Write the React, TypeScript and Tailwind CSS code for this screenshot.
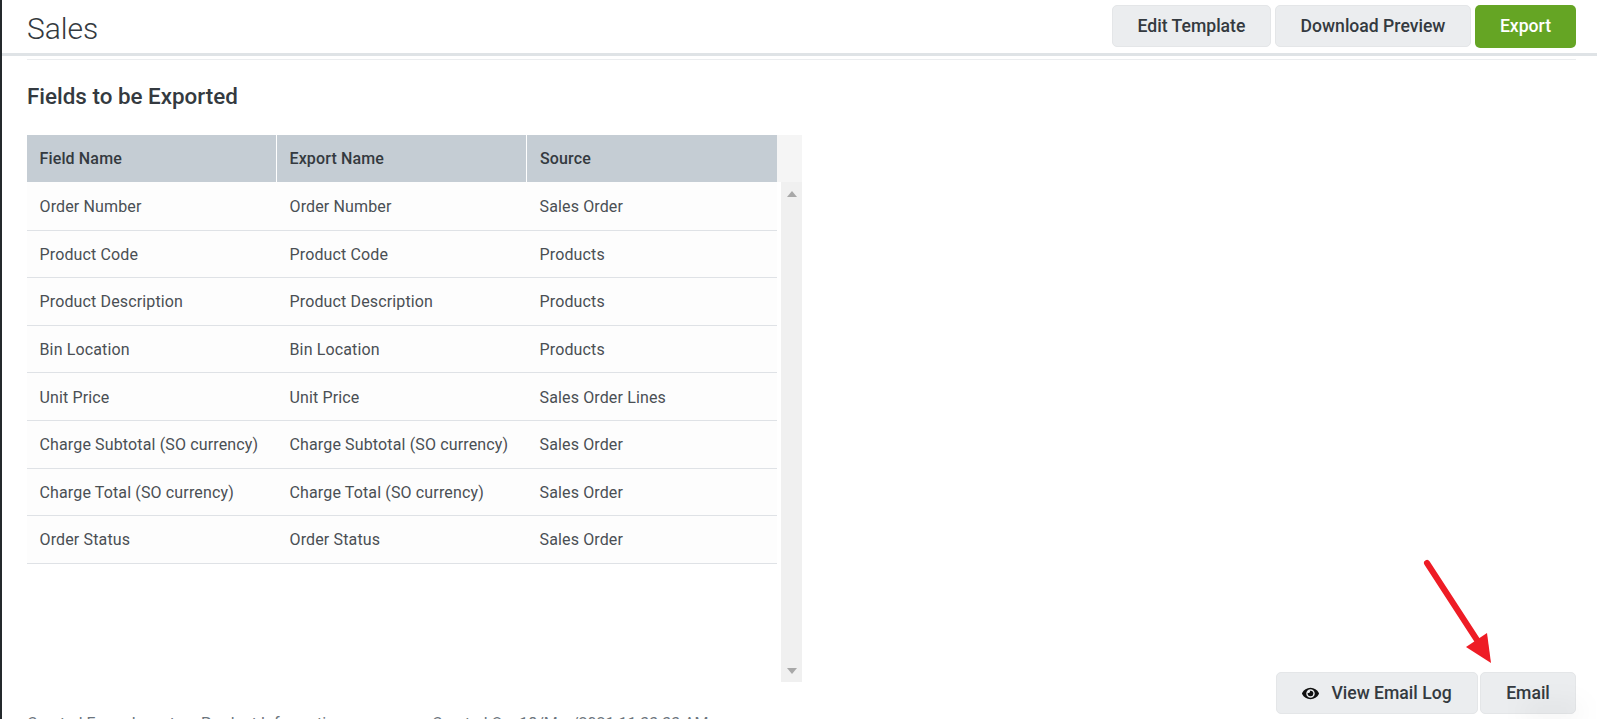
import React from "react";
import { FaEye } from "react-icons/fa";

const rows = [
  ["Order Number", "Order Number", "Sales Order"],
  ["Product Code", "Product Code", "Products"],
  ["Product Description", "Product Description", "Products"],
  ["Bin Location", "Bin Location", "Products"],
  ["Unit Price", "Unit Price", "Sales Order Lines"],
  ["Charge Subtotal (SO currency)", "Charge Subtotal (SO currency)", "Sales Order"],
  ["Charge Total (SO currency)", "Charge Total (SO currency)", "Sales Order"],
  ["Order Status", "Order Status", "Sales Order"],
];

const btn =
  "h-[42px] rounded-[5px] border border-[#e4e6e8] bg-[#ebedef] text-[17.6px] font-medium text-[#343a40] flex items-center justify-center";

export default function App() {
  return (
    <div className="relative h-[719px] w-full overflow-hidden bg-white border-l-2 border-[#24292c] font-['Roboto',sans-serif] text-[#343a40]">
      {/* header */}
      <div className="flex h-[56px] items-start justify-between border-b-[3px] border-[#dfe3e6] pl-[25px] pr-[21px] pt-[5px]">
        <h1 className="mt-[6px] text-[30px] leading-[36px] font-light text-[#343a40]">Sales</h1>
        <div className="flex gap-1">
          <button className={`${btn} w-[159px]`}>Edit Template</button>
          <button className={`${btn} w-[196px]`}>Download Preview</button>
          <button className="h-[43px] w-[101px] rounded-[5px] bg-[#65a524] text-[17.6px] font-medium text-white">Export</button>
        </div>
      </div>

      <div className="pl-[25px] pr-[21px] pt-[3px]">
        <div className="border-t border-[#ebedef]" />
        <h2 className="mt-[22px] text-[22.4px] leading-[28px] font-medium text-[#343a40]">Fields to be Exported</h2>

        <div className="mt-[25px] flex w-[775px]">
          <div className="w-[750px]">
            <div className="grid h-[47px] grid-cols-[250px_250px_250px] bg-[#c5cdd4] text-[16px] tracking-[0.14px] font-medium">
              <div className="flex items-center border-r border-white pl-[12.5px]">Field Name</div>
              <div className="flex items-center border-r border-white pl-[12.5px]">Export Name</div>
              <div className="flex items-center pl-[13px]">Source</div>
            </div>
            {rows.map((r, i) => (
              <div
                key={i}
                className={`grid ${i === 0 ? "h-[48.6px]" : "h-[47.6px]"} grid-cols-[250px_250px_250px] items-center border-b border-[#dfe2e6] bg-[#fdfdfd] pt-[2px] text-[16px] tracking-[0.14px] text-[#4a4f54]`}
              >
                <div className="pl-[12.5px]">{r[0]}</div>
                <div className="pl-[12.5px]">{r[1]}</div>
                <div className="pl-[12.5px]">{r[2]}</div>
              </div>
            ))}
          </div>
          <div className="flex h-[547px] w-[25px] flex-col">
            <div className="h-[47px] bg-[#f5f5f5]" />
            <div className="ml-[4px] flex flex-1 flex-col items-center justify-between bg-[#f0f0f0] pt-[9px] pb-[8px]">
              <div className="h-0 w-0 border-x-[5px] border-b-[6px] border-x-transparent border-b-[#a8a8a8]" />
              <div className="h-0 w-0 border-x-[5px] border-t-[6px] border-x-transparent border-t-[#a8a8a8]" />
            </div>
          </div>
        </div>
      </div>

      {/* bottom actions */}
      <div className="mt-[-10px] flex justify-end gap-[2px] pr-[21px]">
        <button className={`${btn} w-[202px] gap-[12px]`}>
          <FaEye size={17} className="text-[#111]" />
          View Email Log
        </button>
        <button className={`${btn} w-[96px]`}>Email</button>
      </div>

      <div className="mt-[1px] whitespace-nowrap pl-[25px] text-[16px] leading-[18px] text-[#6c757d]">
        <span className="inline-block w-[405px]">Created From: Inventory Product Information</span>
        <span>Created On: 18/Mar/2021 11:33:33 AM</span>
      </div>

      {/* faint shadow under the corner of the Email button */}
      <div className="pointer-events-none absolute left-[1520px] top-[704px] h-[16px] w-[60px] rounded-full bg-black/5 blur-md" />

      <svg className="absolute left-[1413px] top-[558px]" width="80" height="110" viewBox="0 0 80 110">
        <line x1="12" y1="5" x2="62" y2="82" stroke="#ee1c25" strokeWidth="6" strokeLinecap="round" />
        <polygon points="76,105 51,89 72,75" fill="#ee1c25" />
      </svg>
    </div>
  );
}
